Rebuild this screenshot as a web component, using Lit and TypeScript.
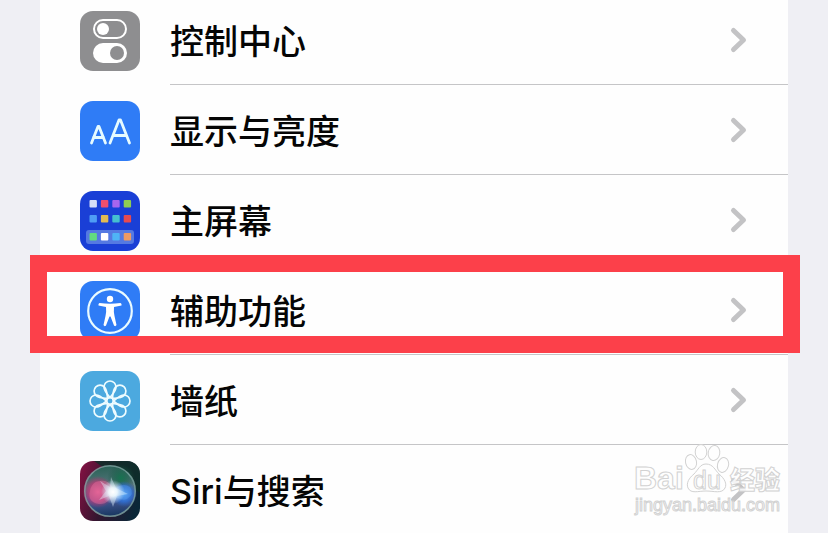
import { LitElement, html, svg, css } from "lit";
import { customElement, property } from "lit/decorators.js";

const appColors = [
  ["#d5def8", "#ee4f6e", "#a765ee", "#8fce52"],
  ["#4f9df5", "#e2bb52", "#45bfd0", "#e84a50"],
  ["#62dc80", "#ffffff", "#4fb4f6", "#ef9a63"],
];
const appRows = [9, 24, 42];

const icons: Record<string, unknown> = {
  control: svg`
    <rect width="60" height="60" fill="#8e8e90"/>
    <rect x="14" y="9" width="32" height="18" rx="9" fill="none" stroke="#fff" stroke-width="2"/>
    <circle cx="23" cy="18" r="6" fill="#fff"/>
    <rect x="13" y="32" width="34" height="20" rx="10" fill="#fff"/>
    <circle cx="37" cy="42" r="7" fill="#8e8e90"/>`,
  display: svg`
    <rect width="60" height="60" fill="#2f7cf6"/>
    <g fill="none" stroke="#e6fbff" stroke-width="2.8" stroke-linecap="round" stroke-linejoin="round">
      <path d="M11.5 42 L18 25.5 H19 L25.5 42 M13.5 36.5 H23.5"/>
      <path d="M30 42 L39 19 H40.5 L49.5 42 M33 34.5 H46.5"/>
    </g>`,
  home: svg`
    <rect width="60" height="60" fill="#1a3fd6"/>
    <rect x="6" y="39" width="48" height="14" rx="3" fill="#5579e2"/>
    ${appColors.map((row, r) =>
      row.map((c, i) => svg`<rect x=${9.5 + i * 11.4} y=${appRows[r]} width="7.4" height="7.4" rx="1" fill=${c}/>`)
    )}`,
  access: svg`
    <rect width="60" height="60" fill="#2f7cf6"/>
    <circle cx="30" cy="30" r="21.8" fill="none" stroke="#e9fbff" stroke-width="2.2"/>
    <circle cx="30" cy="18" r="3.2" fill="#fff"/>
    <path d="M19.5 22 Q30 23.5 40.5 22 Q42 22.500 41.5 24.500 L34 26 Q33.5 31 34.5 35 L36.5 44 Q35.5 46 34 44.5 L30.5 35.5 H29.5 L26 44.5 Q24.5 46 23.5 44 L25.5 35 Q26.5 31 26 26 L18.5 24.500 Q18 22.500 19.5 22Z" fill="#fff"/>`,
  wallpaper: svg`
    <rect width="60" height="60" fill="#4ca9df"/>
    <g fill="none" stroke="#eefcff" stroke-width="1.7" stroke-linejoin="round">
      ${[0, 45, 90, 135, 180, 225, 270, 315].map(
        (a) => svg`<path transform="rotate(${a} 30 30)" d="M30 26.5 C27.5 23.5 24 20 24 16 A6 6 0 1 1 36 16 C36 20 32.5 23.5 30 26.5 Z"/>`
      )}
      <circle cx="30" cy="30" r="3.3"/>
    </g>`,
  siri: svg`
    <defs>
      <linearGradient id="base" x1="0" y1="0.3" x2="1" y2="0.6">
        <stop offset="0" stop-color="#7a1240"/><stop offset="0.45" stop-color="#33152f"/><stop offset="1" stop-color="#0a2738"/>
      </linearGradient>
      <linearGradient id="orb" x1="0.45" y1="0" x2="0.55" y2="1">
        <stop offset="0" stop-color="#2b6257"/><stop offset="0.4" stop-color="#55757c"/><stop offset="0.65" stop-color="#4a5c98"/><stop offset="1" stop-color="#17365f"/>
      </linearGradient>
      <radialGradient id="pink"><stop offset="0" stop-color="#d8568d"/><stop offset="0.6" stop-color="#c03a77" stop-opacity="0.8"/><stop offset="1" stop-color="#b22c68" stop-opacity="0"/></radialGradient>
      <radialGradient id="blue"><stop offset="0" stop-color="#5aa9f5"/><stop offset="0.6" stop-color="#2c70d8" stop-opacity="0.8"/><stop offset="1" stop-color="#2665c4" stop-opacity="0"/></radialGradient>
      <radialGradient id="green"><stop offset="0" stop-color="#167450"/><stop offset="1" stop-color="#12503c" stop-opacity="0"/></radialGradient>
      <radialGradient id="glow"><stop offset="0" stop-color="#fff"/><stop offset="0.35" stop-color="#f3fdff" stop-opacity="0.9"/><stop offset="1" stop-color="#cbeaff" stop-opacity="0"/></radialGradient>
    </defs>
    <rect width="60" height="60" fill="url(#base)"/>
    <path d="M14 0 H60 V32 Z" fill="#0c3029" opacity="0.8"/>
    <circle cx="30" cy="30" r="25" fill="url(#orb)"/>
    <circle cx="41" cy="17" r="14" fill="url(#green)"/>
    <circle cx="18" cy="31" r="16" fill="url(#pink)"/>
    <circle cx="44" cy="33" r="13" fill="url(#blue)"/>
    <path d="M20 20 C29 18 34 27 34 31 C31 38 26 44 19 43 C11 42 8 37 10 30 C11 24 15 20 20 20Z" fill="#ff88af" opacity="0.3"/>
    <path d="M30 31 Q42 20 50 26 Q55 33 47 38 Q40 41 30 31Z" fill="#5ba4f5" opacity="0.35"/>
    <path d="M31 16 L36 27 L48 33 L37 35 L33 46 L29 35 L19 39 L26 30 L20 20 L30 26Z" fill="#e3f5ff" opacity="0.4"/>
    <circle cx="33" cy="31" r="12" fill="url(#glow)"/>
    <circle cx="30" cy="30" r="25.3" fill="none" stroke="#89b0ad" stroke-width="1.5" opacity="0.75"/>`,
};

interface Entry {
  icon: string;
  label: string;
  marked?: boolean;
}

const entries: Entry[] = [
  { icon: "control", label: "控制中心" },
  { icon: "display", label: "显示与亮度" },
  { icon: "home", label: "主屏幕" },
  { icon: "access", label: "辅助功能", marked: true },
  { icon: "wallpaper", label: "墙纸" },
  { icon: "siri", label: "Siri与搜索" },
];

@customElement("settings-row")
export class SettingsRow extends LitElement {
  @property() icon = "";
  @property() label = "";
  @property({ type: Boolean }) marked = false;

  static styles = css`
    :host { display: block; }
    .row {
      position: relative;
      display: flex;
      gap: 30px;
      padding-left: 40px;
      color: #050505;
      text-decoration: none;
    }
    .icon {
      flex: none;
      width: 60px;
      height: 60px;
      margin-top: 16px;
      border-radius: 13px;
    }
    .body {
      flex: 1;
      display: flex;
      align-items: center;
      justify-content: space-between;
      height: 89px;
      padding-right: 40px;
      border-bottom: 1px solid #c5c5c7;
    }
    .label {
      padding-top: 4px;
      font-size: 34px;
      line-height: 40px;
      font-weight: 500;
    }
    .chevron { width: 20px; height: 28px; }
    .mark {
      position: absolute;
      inset: -10px -12px 2px -10px;
      border: 17px solid #fc404a;
      pointer-events: none;
    }
  `;

  render() {
    return html`
      <a class="row" href="#${this.icon}">
        <svg class="icon" viewBox="0 0 60 60" aria-hidden="true">${icons[this.icon]}</svg>
        <span class="body">
          <span class="label">${this.label}</span>
          <svg class="chevron" viewBox="0 0 20 28" aria-hidden="true">
            <path d="M5.5 4.5 L15.5 14 L5.5 23.5" fill="none" stroke="#c3c3c5" stroke-width="5" stroke-linecap="round" stroke-linejoin="round"/>
          </svg>
        </span>
        ${this.marked ? html`<span class="mark"></span>` : ""}
      </a>
    `;
  }
}

@customElement("app-root")
export class AppRoot extends LitElement {
  static styles = css`
    :host {
      position: relative;
      display: block;
      box-sizing: border-box;
      height: 100vh;
      padding: 0 40px;
      overflow: hidden;
      background: #efeff4;
      font-family: Inter, "Noto Sans CJK SC", sans-serif;
    }
    .list {
      min-height: 100%;
      margin: -5px 0 0;
      padding: 0;
      list-style: none;
      background: #fefefe;
    }
    .watermark {
      position: absolute;
      right: 40px;
      bottom: 13px;
      width: 156px;
      height: 80px;
    }
    .outline {
      fill: #fefefe;
      fill-opacity: 0.85;
      stroke: #d2d2d2;
      stroke-width: 1;
    }
    .brand { font: 700 32px "Liberation Sans", sans-serif; }
    .du { font: 400 25px "Liberation Sans", sans-serif; }
    .cjk { font: 900 25px "Noto Sans CJK SC", sans-serif; }
    .site { font: 400 18px "Liberation Sans", sans-serif; }
  `;

  render() {
    return html`
      <ul class="list">
        ${entries.map(
          (e) => html`<li>
            <settings-row .icon=${e.icon} .label=${e.label} .marked=${!!e.marked}></settings-row>
          </li>`
        )}
      </ul>
      <svg class="watermark" viewBox="0 0 156 80">
        <g class="outline">
          <text class="brand" x="2" y="49">Bai</text>
          <ellipse cx="59" cy="22" rx="5.5" ry="7.5" transform="rotate(-12 59 22)"/>
          <ellipse cx="69" cy="12" rx="5.8" ry="7.5"/>
          <ellipse cx="82" cy="13" rx="5.8" ry="7.5" transform="rotate(10 82 13)"/>
          <ellipse cx="91" cy="25" rx="5.5" ry="7.5" transform="rotate(15 91 25)"/>
          <path d="M74 24 C81 24 83 30 87 34 C93 39 95 44 93 48 C90 54 82 51 74 51 C66 51 59 54 56 48 C54 43 57 38 62 34 C66 30 68 24 74 24Z"/>
          <text class="du" x="61" y="49">du</text>
          <text class="cjk" x="98" y="49">经验</text>
          <text class="site" x="3" y="71">jingyan.baidu.com</text>
        </g>
      </svg>
    `;
  }
}
